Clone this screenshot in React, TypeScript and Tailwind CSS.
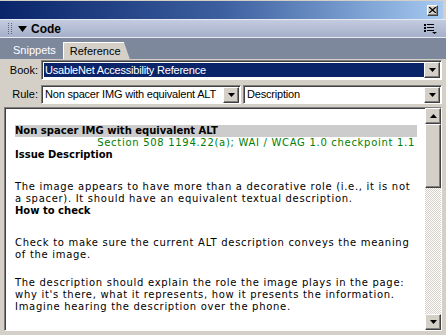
import React from 'react';

const ui = "font-['Liberation_Sans',Arial,sans-serif]";
const mono = "font-['DejaVu_Sans',Verdana,sans-serif]";

const raised =
  'border border-t-white border-l-white border-r-[#404040] border-b-[#404040] shadow-[inset_-1px_-1px_#808080] bg-[#d4d0c8]';
const sunken =
  'border border-t-[#808080] border-l-[#808080] border-r-white border-b-white shadow-[inset_1px_1px_#404040]';

const DownArrow = () => (
  <svg width="7" height="4" viewBox="0 0 7 4">
    <path d="M0 0h7L3.5 4z" fill="#000" />
  </svg>
);

const UpArrow = () => (
  <svg width="7" height="4" viewBox="0 0 7 4">
    <path d="M0 4h7L3.5 0z" fill="#000" />
  </svg>
);

const DropButton: React.FC = () => (
  <div className={`${raised} w-[16px] h-[16px] flex items-center justify-center shrink-0`}>
    <DownArrow />
  </div>
);

const Select: React.FC<{ text: string; selected?: boolean; className?: string }> = ({ text, selected, className }) => (
  <div className={`${sunken} ${className ?? ''} h-[20px] flex items-center bg-white pl-[2px] pr-[1px] overflow-hidden`}>
    <div
      className={`flex-1 min-w-0 h-[14px] flex items-center pl-[1px] text-[11px] tracking-[-0.2px] leading-none whitespace-nowrap overflow-hidden ${
        selected ? 'bg-[#0a246a] text-white' : 'text-black'
      }`}
    >
      {text}
    </div>
    <DropButton />
  </div>
);

const Grip = () => (
  <svg width="5" height="11" viewBox="0 0 5 11">
    {[0, 2, 4, 6, 8, 10].map(y => (
      <g key={y}>
        <rect x="0" y={y} width="1" height="1" fill="#5a6680" />
        <rect x="3" y={y} width="1" height="1" fill="#5a6680" />
      </g>
    ))}
  </svg>
);

const OptionsIcon = () => (
  <svg width="13" height="10" viewBox="0 0 13 10">
    {[0, 3, 6].map(y => (
      <g key={y}>
        <rect x="0" y={y} width="2" height="2" fill="#000" />
        <rect x="3" y={y} width="7" height="1" fill="#000" />
      </g>
    ))}
    <path d="M8 8h5l-2.5 2z" fill="#000" />
  </svg>
);

export default function App() {
  return (
    <div className={`${ui} w-[446px] h-[335px] bg-[#d4d0c8] flex flex-col overflow-hidden select-none`}>
      {/* window title */}
      <div className="h-[20px] shrink-0 pt-[1px] pr-[3px] border-b border-b-[#e6e9f2]">
        <div className="h-[18px] bg-gradient-to-r from-[#0a246a] via-[#3d5f9f] to-[#a6caf0] flex items-center justify-end pr-[5px]">
          <div className={`${raised} w-[11px] h-[11px] flex items-center justify-center`}>
            <svg width="7" height="6" viewBox="0 0 7 6">
              <path d="M0 0l7 6M7 0L0 6" stroke="#000" strokeWidth="1.3" />
            </svg>
          </div>
        </div>
      </div>

      {/* panel header */}
      <div className="h-[18px] shrink-0 bg-gradient-to-b from-[#c3cbdf] to-[#a5b0c9] flex items-center pl-[8px] pr-[9px] border-b border-b-[#e8ebf2]">
        <Grip />
        <svg width="9" height="6" viewBox="0 0 9 6" className="ml-[5px]">
          <path d="M0 0h9L4.5 6z" fill="#000" />
        </svg>
        <span className="ml-[4px] text-[12px] font-bold text-black">Code</span>
        <div className="flex-1" />
        <OptionsIcon />
      </div>

      {/* tabs */}
      <div className="h-[21px] shrink-0 bg-[#7d889d] flex items-end pl-[4px]">
        <div className="h-[17px] px-[9px] flex items-center text-[11px] text-white">Snippets</div>
        <div className="h-[17px] w-[67px] -ml-[2px] bg-[#d4d0c8] border-t border-l border-white pl-[6px] flex items-center text-[11px] text-black [clip-path:polygon(0_0,calc(100%-6px)_0,100%_100%,0_100%)]">
          Reference
        </div>
      </div>

      {/* body */}
      <div className="flex-1 flex flex-col pr-[4px] pl-[4px] pb-[4px]">
        <div className="flex items-center mt-[1px] h-[20px] text-[11px]">
          <span className="w-[37px] text-right pr-[3px] text-black">Book:</span>
          <Select text="UsableNet Accessibility Reference" selected className="flex-1" />
        </div>
        <div className="flex items-center mt-[5px] h-[19px] text-[11px]">
          <span className="w-[37px] text-right pr-[3px] text-black">Rule:</span>
          <Select text="Non spacer IMG with equivalent ALT" className="w-[200px] !h-[19px]" />
          <Select text="Description" className="flex-1 ml-[2px] !h-[19px]" />
        </div>

        <div className={`${sunken} mt-[3px] flex-1 flex bg-white`}>
          <div className={`${mono} flex-1 pl-[10px] pr-[8px] pt-[17px] text-[10px] leading-[12px] tracking-[0.7px] text-black`}>
            <div className="bg-[#cccccc] font-bold tracking-normal">Non spacer IMG with equivalent ALT</div>
            <div className="text-right text-[#008000] tracking-[0.7px] pr-[2px]">
              Section 508 1194.22(a); WAI / WCAG 1.0 checkpoint 1.1
            </div>
            <div className="font-bold tracking-normal">Issue Description</div>
            <p className="mt-[20px] pr-[2px]">
              The image appears to have more than a decorative role (i.e., it is not a spacer). It should have an
              equivalent textual description.
            </p>
            <div className="font-bold tracking-normal">How to check</div>
            <p className="mt-[20px] pr-[2px]">
              Check to make sure the current ALT description conveys the meaning of the image.
            </p>
            <p className="mt-[16px] pr-[2px]">
              The description should explain the role the image plays in the page: why it's there, what it represents,
              how it presents the information. Imagine hearing the description over the phone.
            </p>
          </div>

          {/* scrollbar */}
          <div className="w-[16px] flex flex-col [background:repeating-conic-gradient(#d4d0c8_0%_25%,#ffffff_0%_50%)_0_0/2px_2px]">
            <div className={`${raised} h-[16px] flex items-center justify-center`}>
              <UpArrow />
            </div>
            <div className={`${raised} h-[64px]`} />
            <div className="flex-1" />
            <div className={`${raised} h-[16px] flex items-center justify-center`}>
              <DownArrow />
            </div>
          </div>
        </div>
      </div>
    </div>
  );
}
